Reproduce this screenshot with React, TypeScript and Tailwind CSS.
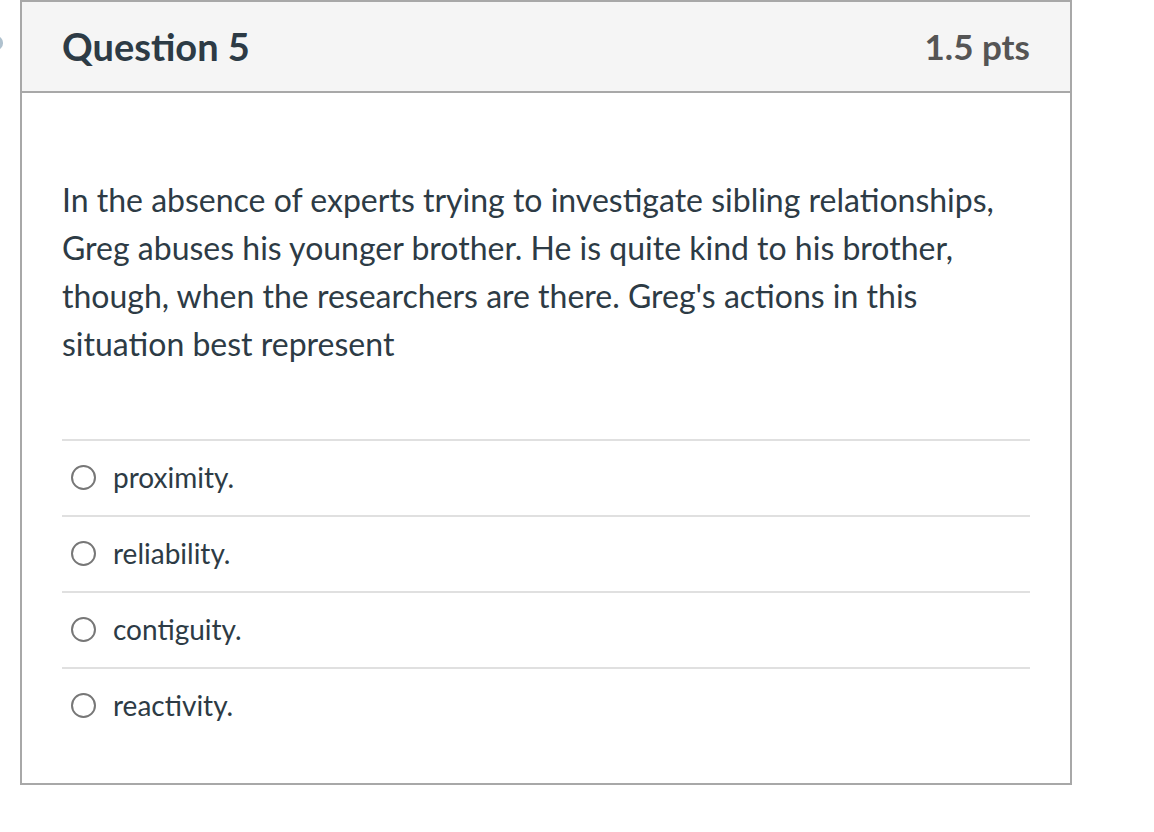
const ANSWERS = ["proximity.", "reliability.", "contiguity.", "reactivity."];

export default function App() {
  return (
    <div
      className="relative min-h-screen bg-white"
      style={{ fontFamily: "Lato, 'Open Sans', sans-serif" }}
    >
      {/* partial flag marker peeking in from the left edge */}
      <div className="absolute left-[-10px] top-[36px] h-[14px] w-[13px] rounded-full bg-[#7a98ad] opacity-60" />

      <div className="ml-[20px] w-[1052px] border-2 border-[#a8a8a8] bg-white">
        <div className="flex h-[91px] items-center justify-between border-b-2 border-[#a8a8a8] bg-[#f5f5f5] px-[40px]">
          <h2 className="text-[38px] font-bold text-[#2d3b45]">Question 5</h2>
          <span className="text-[35px] font-bold text-[#555555]">1.5 pts</span>
        </div>

        <div className="px-[40px] pt-[83px] pb-[40px]">
          <p className="text-[32px] leading-[48px] text-[#2d3b45]">
            In the absence of experts trying to investigate sibling relationships,
            Greg abuses his younger brother. He is quite kind to his brother,
            though, when the researchers are there. Greg&apos;s actions in this
            situation best represent
          </p>

          <div className="mt-[71px]">
            {ANSWERS.map((a) => (
              <label
                key={a}
                className="flex h-[76px] items-center border-t-2 border-[#e0e0e0] pl-[9px] pb-[2px]"
              >
                <span className="h-[25px] w-[25px] shrink-0 rounded-full border-2 border-[#777777] bg-white" />
                <span className="ml-[17px] text-[28px] text-[#2d3b45]">{a}</span>
              </label>
            ))}
          </div>
        </div>
      </div>
    </div>
  );
}
